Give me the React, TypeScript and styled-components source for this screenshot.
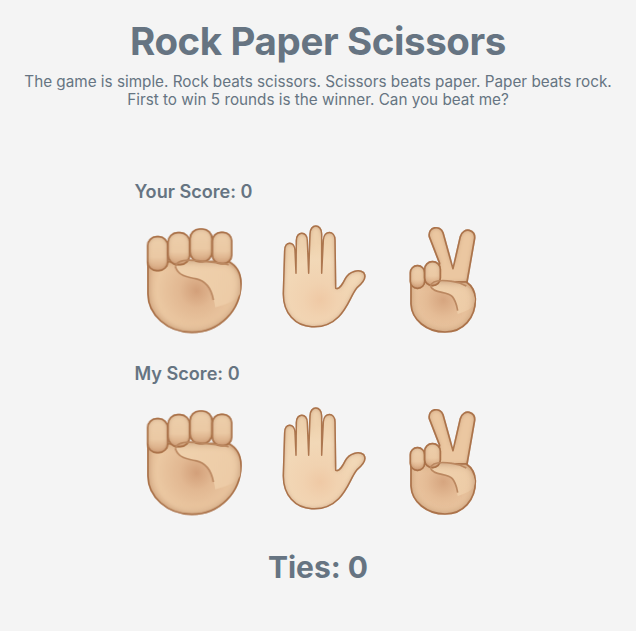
import React from 'react'
import styled, { createGlobalStyle } from 'styled-components'

const GlobalStyle = createGlobalStyle`
  body {
    margin: 0;
    background: #f4f4f4;
    font-family: Inter, "Liberation Sans", sans-serif;
    color: #667482;
  }
`

const Page = styled.div`
  height: 631px;
  overflow: hidden;
  display: flex;
  flex-direction: column;
  align-items: center;
`

const Title = styled.h1`
  margin: 16px 0 0;
  font-size: 38.5px;
  line-height: 50px;
  font-weight: 700;
  letter-spacing: -0.4px;
`

const Intro = styled.p`
  margin: 7px 0 0;
  width: 636px;
  text-align: center;
  font-size: 15.27px;
  line-height: 18px;
`

const Board = styled.section`
  margin-top: 70px;
  width: 376px;
`

const ScoreLabel = styled.h2`
  margin: 0 0 0 4.5px;
  font-size: 18.1px;
  line-height: 24px;
  font-weight: 600;
`

const HandRow = styled.div`
  margin: 17px 0 21px;
  display: flex;
  gap: 15px;
`

const HandButton = styled.button`
  border: 0;
  padding: 0;
  background: none;
  cursor: pointer;
  display: block;
`

const HandArt = styled.svg<{ $w: number }>`
  display: block;
  width: ${(p) => p.$w}px;
  height: 120px;
`

const Ties = styled.h2`
  margin: 4px 0 0;
  font-size: 30px;
  line-height: 40px;
  font-weight: 700;
`

const EDGE = '#ad7750'
const CREASE = '#bb8861'

function Defs() {
  return (
    <defs>
      <linearGradient id="knuckle" x1="0" y1="0" x2="0" y2="1">
        <stop offset="0" stopColor="#edcfab" />
        <stop offset="0.6" stopColor="#ebc9a4" />
        <stop offset="1" stopColor="#d6a57e" />
      </linearGradient>
      <radialGradient id="palm" gradientUnits="userSpaceOnUse" cx="200" cy="212" r="170">
        <stop offset="0" stopColor="#d3a07a" />
        <stop offset="0.3" stopColor="#e2b892" />
        <stop offset="0.7" stopColor="#ebc8a2" />
        <stop offset="1" stopColor="#e3ba93" />
      </radialGradient>
      <radialGradient id="vpalm" gradientUnits="userSpaceOnUse" cx="145" cy="240" r="125">
        <stop offset="0" stopColor="#d6a57f" />
        <stop offset="0.4" stopColor="#e4bb95" />
        <stop offset="0.8" stopColor="#ebc8a2" />
        <stop offset="1" stopColor="#e3ba93" />
      </radialGradient>
      <linearGradient id="thumb" x1="0" y1="0" x2="1" y2="0.4">
        <stop offset="0" stopColor="#f0d2ae" />
        <stop offset="1" stopColor="#edcca7" />
      </linearGradient>
      <radialGradient id="open" gradientUnits="userSpaceOnUse" cx="150" cy="240" r="170">
        <stop offset="0" stopColor="#efc9a5" />
        <stop offset="0.3" stopColor="#f1d2b0" />
        <stop offset="0.7" stopColor="#f2d8b7" />
        <stop offset="1" stopColor="#efd2ae" />
      </radialGradient>
      <filter id="pillow" x="-5%" y="-5%" width="110%" height="110%">
        <feGaussianBlur in="SourceAlpha" stdDeviation="8" result="spread" />
        <feComposite in="SourceAlpha" in2="spread" operator="out" result="rim" />
        <feFlood floodColor="#a96f45" floodOpacity="0.95" />
        <feComposite in2="rim" operator="in" result="shade" />
        <feMerge>
          <feMergeNode in="SourceGraphic" />
          <feMergeNode in="shade" />
        </feMerge>
      </filter>
      <filter id="wide" x="-5%" y="-5%" width="110%" height="110%">
        <feGaussianBlur in="SourceAlpha" stdDeviation="13" result="spread" />
        <feComposite in="SourceAlpha" in2="spread" operator="out" result="rim" />
        <feFlood floodColor="#a96f45" floodOpacity="0.95" />
        <feComposite in2="rim" operator="in" result="shade" />
        <feMerge>
          <feMergeNode in="SourceGraphic" />
          <feMergeNode in="shade" />
        </feMerge>
      </filter>
      <filter id="soft" x="-5%" y="-5%" width="110%" height="110%">
        <feGaussianBlur stdDeviation="1.6" />
      </filter>
    </defs>
  )
}

function Fist() {
  return (
    <HandArt $w={120} viewBox="0 0 360 360">
      <Defs />
      <g filter="url(#soft)" stroke={EDGE} strokeWidth="5" strokeLinejoin="round">
        <g filter="url(#wide)">
          <path
            d="M54 125 L54 222 C54 284 112 337 186 337 C268 337 332 272 333 190 C333 160 318 136 296 124 Z"
            fill="url(#palm)"
          />
          <path
            d="M136 138 C142 118 176 118 210 122 C250 126 292 128 310 146 C330 166 334 196 330 222 C320 240 296 252 256 262 C254 250 250 226 240 208 C226 186 214 180 196 176 C176 172 146 172 136 138 Z"
            fill="url(#thumb)"
            stroke="none"
          />
        </g>
        <g filter="url(#pillow)">
          <rect x="53" y="50" width="60" height="102" rx="27" fill="url(#knuckle)" />
        </g>
        <g filter="url(#pillow)">
          <rect x="114" y="38" width="65" height="96" rx="29" fill="url(#knuckle)" />
        </g>
        <g filter="url(#pillow)">
          <rect x="180" y="27" width="66" height="98" rx="29" fill="url(#knuckle)" />
        </g>
        <g filter="url(#pillow)">
          <rect x="247" y="37" width="58" height="94" rx="26" fill="url(#knuckle)" />
        </g>
        <path
          d="M136 140 C140 120 170 118 205 122 C240 126 270 128 296 134 M136 140 C146 170 176 172 196 176 C226 182 244 206 250 240"
          fill="none"
          stroke={CREASE}
        />
      </g>
    </HandArt>
  )
}

function Paper() {
  return (
    <HandArt $w={115} viewBox="-15 0 345 360">
      <Defs />
      <g filter="url(#soft)">
        <g filter="url(#pillow)">
          <path
            d="M44 92 C44 62 74 62 75 92 L78 160 L79 62 C79 32 112 32 112 62 L116 160 L120 42 C120 10 155 10 155 42 L155 160 L160 60 C162 30 195 30 195 60 L197 205 C208 210 216 196 226 176 C238 154 266 146 281 158 C292 172 276 190 262 202 C242 226 236 260 206 290 C186 310 156 322 125 320 C76 318 40 280 40 222 Z"
            fill="url(#open)"
            stroke={EDGE}
            strokeWidth="4.5"
            strokeLinejoin="round"
          />
        </g>
      </g>
    </HandArt>
  )
}

function Scissors() {
  return (
    <HandArt $w={100} viewBox="0 0 300 360">
      <Defs />
      <g filter="url(#soft)" stroke={EDGE} strokeWidth="5" strokeLinejoin="round">
        <g filter="url(#pillow)">
          <path
            d="M103 50 C98 20 136 14 144 38 L174 146 L196 50 C204 20 246 26 238 60 L216 186 L120 190 L134 130 Z"
            fill="#ebc7a1"
          />
        </g>
        <g filter="url(#wide)">
          <path
            d="M48 185 L48 252 C50 300 96 336 150 336 C204 336 242 294 241 236 C240 214 232 198 214 186 Z"
            fill="url(#vpalm)"
          />
          <path
            d="M106 198 C112 178 146 180 172 184 C204 188 234 206 240 236 C240 258 226 270 188 282 C186 268 184 244 172 230 C156 212 116 222 106 198 Z"
            fill="url(#thumb)"
            stroke="none"
          />
        </g>
        <g filter="url(#pillow)">
          <rect x="46" y="137" width="43" height="68" rx="21" fill="url(#knuckle)" />
        </g>
        <g filter="url(#pillow)">
          <rect x="89" y="125" width="47" height="72" rx="23" fill="url(#knuckle)" />
        </g>
        <path
          d="M106 198 C112 178 146 180 172 184 C190 186 204 192 214 198 M106 198 C116 222 156 212 172 230 C184 244 186 262 188 272"
          fill="none"
          stroke={CREASE}
        />
      </g>
    </HandArt>
  )
}

function Hands() {
  return (
    <HandRow>
      <HandButton aria-label="rock">
        <Fist />
      </HandButton>
      <HandButton aria-label="paper">
        <Paper />
      </HandButton>
      <HandButton aria-label="scissors">
        <Scissors />
      </HandButton>
    </HandRow>
  )
}

export default function App() {
  return (
    <Page>
      <GlobalStyle />
      <Title>Rock Paper Scissors</Title>
      <Intro>
        The game is simple. Rock beats scissors. Scissors beats paper. Paper beats rock.
        <br />
        First to win 5 rounds is the winner. Can you beat me?
      </Intro>
      <Board>
        <ScoreLabel>Your Score: 0</ScoreLabel>
        <Hands />
        <ScoreLabel>My Score: 0</ScoreLabel>
        <Hands />
      </Board>
      <Ties>Ties: 0</Ties>
    </Page>
  )
}
